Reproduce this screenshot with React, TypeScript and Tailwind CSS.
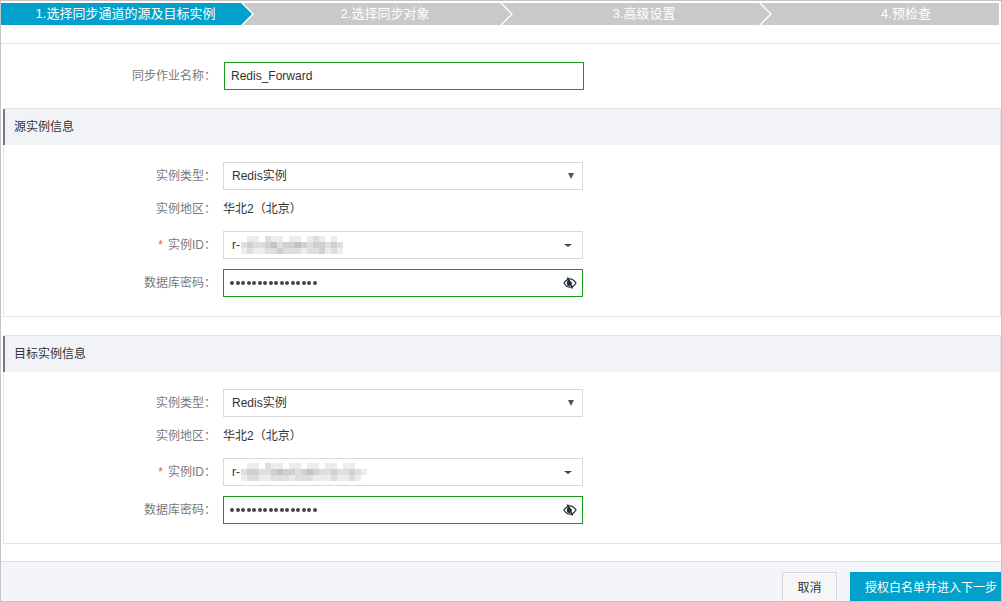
import React from 'react';

const font = { fontFamily: '"Liberation Sans", "Noto Sans CJK SC", sans-serif' };

const steps = [
    { label: '1.选择同步通道的源及目标实例', cls: 'w-[251px] bg-[#02a1cb] pr-[2px] [clip-path:polygon(0_0,calc(100%_-_11px)_0,100%_50%,calc(100%_-_11px)_100%,0_100%)]' },
    { label: '2.选择同步对象', cls: 'w-[268px] -ml-[9px] bg-[#c9c9c9] pl-[16px] [clip-path:polygon(0_0,calc(100%_-_11px)_0,100%_50%,calc(100%_-_11px)_100%,0_100%,11px_50%)]' },
    { label: '3.高级设置', cls: 'w-[268px] -ml-[9px] bg-[#c9c9c9] pl-[16px] [clip-path:polygon(0_0,calc(100%_-_11px)_0,100%_50%,calc(100%_-_11px)_100%,0_100%,11px_50%)]' },
    { label: '4.预检查', cls: 'w-[238px] -ml-[9px] bg-[#c9c9c9] pl-[52px] [clip-path:polygon(0_0,100%_0,100%_100%,0_100%,11px_50%)]' },
];

const shades = ['bg-white', 'bg-[#ececec]', 'bg-[#dedede]', 'bg-[#d0d0d0]', 'bg-[#c2c2c2]'];

const Mosaic: React.FC<{ pattern: number[][] }> = ({ pattern }) => (
    <div className="flex flex-col">
        {pattern.map((row, r) => (
            <div key={r} className="flex">
                {row.map((v, c) => (
                    <div key={c} className={`w-[6px] h-[6px] ${shades[v]}`} />
                ))}
            </div>
        ))}
    </div>
);

const mosaic1 = [
    [0, 1, 1, 0, 2, 1, 1, 0, 1, 1, 0, 1, 2, 1, 0, 1, 0],
    [2, 3, 2, 2, 3, 4, 2, 3, 3, 4, 3, 2, 3, 3, 2, 3, 2],
    [1, 2, 1, 1, 2, 2, 3, 2, 2, 2, 1, 2, 2, 3, 1, 2, 1],
];
const mosaic2 = [
    [0, 1, 1, 0, 2, 1, 1, 0, 1, 1, 0, 1, 1, 0, 1, 1, 0, 1, 1, 0, 0],
    [2, 3, 3, 2, 2, 3, 4, 3, 3, 2, 3, 4, 3, 2, 2, 3, 2, 2, 3, 2, 1],
    [1, 2, 2, 1, 1, 2, 2, 2, 1, 2, 2, 2, 1, 1, 1, 2, 1, 1, 2, 1, 0],
];

// eye with a slash across it
const EyeOff: React.FC = () => (
    <svg width="14" height="12" viewBox="0 0 14 12" className="text-[#26303c]">
        <path d="M1 6 C3 2.8 5 1.8 7 1.8 C9 1.8 11 2.8 13 6 C11 9.2 9 10.2 7 10.2 C5 10.2 3 9.2 1 6 Z" fill="none" stroke="currentColor" strokeWidth="1.3" />
        <path d="M7 2.8 A3.2 3.2 0 0 0 7 9.2 Z" fill="currentColor" />
        <circle cx="7.2" cy="6" r="1.8" fill="currentColor" />
        <path d="M4.5 0.5 L9.5 11.5" stroke="currentColor" strokeWidth="1.7" />
    </svg>
);

const SelectBox: React.FC<{ children: React.ReactNode; caret?: 'native' | 'small' }> = ({ children, caret = 'native' }) => (
    <div className="w-[360px] h-[28px] border border-[#d9d9d9] bg-white flex items-center pl-[8px] pr-[8px] text-[12px] text-[#333]">
        <div className="flex-1 flex items-center">{children}</div>
        {caret === 'native' ? (
            <div className="w-0 h-0 border-l-[3.5px] border-r-[3.5px] border-t-[6px] border-l-transparent border-r-transparent border-t-[#555]" />
        ) : (
            <div className="w-0 h-0 border-l-[4px] border-r-[4px] border-t-[3px] border-l-transparent border-r-transparent border-t-[#444] mr-[2px]" />
        )}
    </div>
);

const PasswordBox: React.FC = () => (
    <div className="w-[360px] h-[28px] border border-[#189a18] bg-white flex items-center pl-[6px] pr-[5px]">
        <div className="flex-1 flex items-center gap-[1.5px]">
            {Array.from({ length: 16 }).map((_, i) => (
                <div key={i} className="w-[4px] h-[4px] rounded-full bg-[#444]" />
            ))}
        </div>
        <EyeOff />
    </div>
);

const Row: React.FC<{ label: string; required?: boolean; className?: string; children: React.ReactNode }> = ({ label, required, className = '', children }) => (
    <div className={`flex items-center gap-[7px] h-[28px] ${className}`}>
        <div className="w-[212px] text-right text-[12px] text-[#7a7a7a]">
            {required && <span className="text-[#f05a28] mr-[5px]">*</span>}
            {label}
        </div>
        {children}
    </div>
);

const InstanceSection: React.FC<{ title: string; mosaic: number[][]; className?: string }> = ({ title, mosaic, className = '' }) => (
    <div className={`ml-[2px] border-t border-r border-b border-[#e2e6eb] ${className}`}>
        <div className="h-[36px] bg-[#f2f3f7] border-l-2 border-[#77778b] flex items-center pl-[9px] text-[12px] text-[#333]">
            {title}
        </div>
        <div className="border-l border-[#e2e6eb] pt-[17px] pb-[19px]">
            <Row label="实例类型：">
                <SelectBox>Redis实例</SelectBox>
            </Row>
            <Row label="实例地区：" className="mt-[5px]">
                <span className="text-[12px] text-[#333]">华北2（北京）</span>
            </Row>
            <Row label="实例ID：" required className="mt-[8px]">
                <SelectBox caret="small">
                    <span className="mr-[1px]">r-</span>
                    <Mosaic pattern={mosaic} />
                </SelectBox>
            </Row>
            <Row label="数据库密码：" className="mt-[10px]">
                <PasswordBox />
            </Row>
        </div>
    </div>
);

const App: React.FC = () => {
    return (
        <div style={font} className="w-[1002px] h-[602px] overflow-hidden border border-[#c4c4c4] bg-white flex flex-col">
            {/* Steps */}
            <div className="flex mt-[2px] h-[22px] shrink-0">
                {steps.map(s => (
                    <div key={s.label} className={`h-full flex items-center justify-center text-[13px] text-white shrink-0 ${s.cls}`}>
                        {s.label}
                    </div>
                ))}
            </div>
            <div className="h-[19px] border-b border-[#e3e3e3] shrink-0" />

            {/* Job name */}
            <div className="flex items-center gap-[8px] h-[28px] mt-[18px] mb-[18px] shrink-0">
                <div className="w-[215px] text-right text-[12px] text-[#7a7a7a]">同步作业名称：</div>
                <div className="w-[360px] h-[28px] border border-[#189a18] flex items-center pl-[6px] text-[12px] text-[#333]">
                    Redis_Forward
                </div>
            </div>

            <InstanceSection title="源实例信息" mosaic={mosaic1} />
            <InstanceSection title="目标实例信息" mosaic={mosaic2} className="mt-[18px]" />

            {/* Footer */}
            <div className="mt-[17px] flex-1 border-t border-[#dcdcdc] bg-[#f4f5f9] flex items-start pt-[10px] pl-[781px]">
                <button className="w-[55px] h-[32px] shrink-0 border border-[#d6d6d6] bg-[#f6f6f6] text-[12px] text-[#333]">
                    取消
                </button>
                <button className="ml-[13px] h-[32px] shrink-0 whitespace-nowrap bg-[#02a1cb] px-[15px] text-[12px] text-white">
                    授权白名单并进入下一步
                </button>
            </div>
        </div>
    );
};

export default App;
